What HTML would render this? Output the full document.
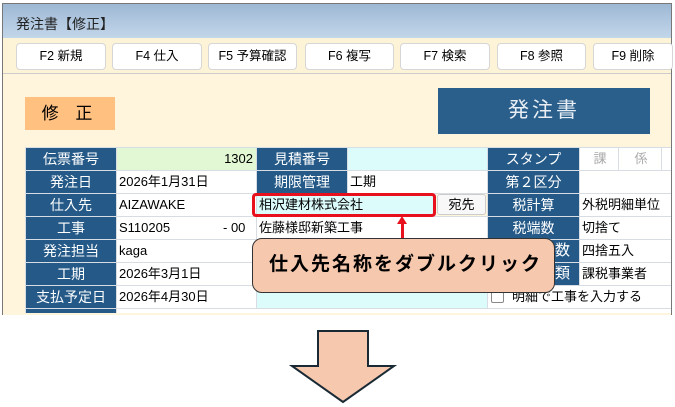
<!DOCTYPE html>
<html><head><meta charset="utf-8"><style>
*{margin:0;padding:0;box-sizing:border-box}
body{width:675px;height:407px;background:#fff;position:relative;overflow:hidden;font-family:"Liberation Sans","Noto Sans CJK JP",sans-serif;font-size:13px;color:#000}
.a{position:absolute}
.btn{position:absolute;top:43px;height:27px;background:#fff;border:1px solid #d6d6d6;border-radius:4px;text-align:center;line-height:25px;font-size:12.5px}
.l{position:absolute;background:#255a88;color:#fff;text-align:center;font-size:14px;height:22px;line-height:22px;white-space:nowrap}
.v{position:absolute;background:#fff;height:22px;line-height:22px;font-size:13px;padding-left:2px;white-space:nowrap}
</style></head><body>
<div class="a" style="left:2px;top:3px;width:670px;height:312px;border:1px solid #777;border-bottom:none;background:#fff5dc"></div>
<div class="a" style="left:3px;top:4px;width:668px;height:34px;background:linear-gradient(#9db8d4,#c3d6ea)"></div>
<div class="a" style="left:16px;top:14px;font-size:14px;color:#222">発注書【修正】</div>
<div class="a" style="left:3px;top:38px;width:668px;height:36px;background:#fdf3d6;border-bottom:1px solid #ccc"></div>
<div class="btn" style="left:16px;width:90px">F2 新規</div>
<div class="btn" style="left:112px;width:90px">F4 仕入</div>
<div class="btn" style="left:208px;width:89px">F5 予算確認</div>
<div class="btn" style="left:305px;width:89px">F6 複写</div>
<div class="btn" style="left:400px;width:90px">F7 検索</div>
<div class="btn" style="left:497px;width:89px">F8 参照</div>
<div class="btn" style="left:593px;width:80px">F9 削除</div>
<div class="a" style="left:25px;top:97px;width:90px;height:33px;background:#ffc080;text-align:center;line-height:33px;font-size:17px;letter-spacing:6px">修 正</div>
<div class="a" style="left:438px;top:88px;width:212px;height:46px;background:#2a5f8c;color:#e8eef4;text-align:center;line-height:46px;font-size:21px;letter-spacing:3px">発注書</div>
<div class="a" style="left:25px;top:147px;width:646px;height:166px;background:#d8dde4"></div>

<div class="l" style="left:26px;top:148px;width:90px">伝票番号</div>
<div class="v" style="left:117px;top:148px;width:139px;background:#e2f8d4;text-align:right;padding-right:3px">1302</div>
<div class="l" style="left:257px;top:148px;width:90px">見積番号</div>
<div class="v" style="left:348px;top:148px;width:139px;background:#dcfcfc"></div>
<div class="l" style="left:488px;top:148px;width:91px">スタンプ</div>
<div class="v" style="left:580px;top:148px;width:38px;color:#aaa;text-align:center">課</div>
<div class="v" style="left:619px;top:148px;width:42px;color:#aaa;text-align:center">係</div>
<div class="v" style="left:662px;top:148px;width:9px"></div>

<div class="l" style="left:26px;top:171px;width:90px">発注日</div>
<div class="v" style="left:117px;top:171px;width:139px">2026年1月31日</div>
<div class="l" style="left:257px;top:171px;width:90px">期限管理</div>
<div class="v" style="left:348px;top:171px;width:139px">工期</div>
<div class="l" style="left:488px;top:171px;width:91px">第２区分</div>
<div class="v" style="left:580px;top:171px;width:91px"></div>

<div class="l" style="left:26px;top:194px;width:90px">仕入先</div>
<div class="v" style="left:117px;top:194px;width:139px">AIZAWAKE</div>
<div class="v" style="left:257px;top:194px;width:178px;background:#dcfcfc">相沢建材株式会社</div>
<div class="v" style="left:436px;top:194px;width:51px;background:#fdf5dc"></div>
<div class="a" style="left:437px;top:194px;width:49px;height:21px;background:#f8f8f8;border:1px solid #ccc;border-radius:3px;text-align:center;line-height:19px">宛先</div>
<div class="l" style="left:488px;top:194px;width:91px">税計算</div>
<div class="v" style="left:580px;top:194px;width:91px">外税明細単位</div>

<div class="l" style="left:26px;top:217px;width:90px">工事</div>
<div class="v" style="left:117px;top:217px;width:139px">S110205<span style="position:absolute;left:106px">- 00</span></div>
<div class="v" style="left:257px;top:217px;width:230px">佐藤様邸新築工事</div>
<div class="l" style="left:488px;top:217px;width:91px">税端数</div>
<div class="v" style="left:580px;top:217px;width:91px">切捨て</div>

<div class="l" style="left:26px;top:240px;width:90px">発注担当</div>
<div class="v" style="left:117px;top:240px;width:139px">kaga</div>
<div class="v" style="left:257px;top:240px;width:230px"></div>
<div class="l" style="left:488px;top:240px;width:91px;text-align:right;padding-right:9px;font-size:15px">単価端数</div>
<div class="v" style="left:580px;top:240px;width:91px">四捨五入</div>

<div class="l" style="left:26px;top:263px;width:90px">工期</div>
<div class="v" style="left:117px;top:263px;width:139px">2026年3月1日</div>
<div class="v" style="left:257px;top:263px;width:230px"></div>
<div class="l" style="left:488px;top:263px;width:91px;text-align:right;padding-right:9px;font-size:15px">課税種類</div>
<div class="v" style="left:580px;top:263px;width:91px">課税事業者</div>

<div class="l" style="left:26px;top:286px;width:90px">支払予定日</div>
<div class="v" style="left:117px;top:286px;width:139px">2026年4月30日</div>
<div class="v" style="left:257px;top:286px;width:230px;background:#dcfcfc"></div>
<div class="v" style="left:488px;top:286px;width:183px;padding-left:24px">明細で工事を入力する</div>
<div class="a" style="left:491px;top:290px;width:13px;height:13px;border:1px solid #888;border-radius:2px;background:#fff"></div>
<div class="l" style="left:26px;top:309px;width:90px;height:4px"></div>
<div class="v" style="left:117px;top:309px;width:554px;height:4px"></div>

<div class="a" style="left:252px;top:193px;width:184px;height:24px;border:3px solid #e8101c;border-radius:4px"></div>
<div class="a" style="left:401px;top:222px;width:3px;height:17px;background:#e8101c"></div>
<div class="a" style="left:397px;top:216px;width:0;height:0;border-left:5px solid transparent;border-right:5px solid transparent;border-bottom:8px solid #e8101c"></div>
<div class="a" style="left:252px;top:238px;width:303px;height:55px;background:#f6c8ae;border:1.5px solid #333;border-radius:10px;font-size:19px;font-weight:bold;line-height:52px;padding-left:16px;letter-spacing:2px;white-space:nowrap">仕入先名称をダブルクリック</div>

<svg class="a" style="left:0;top:0" width="675" height="407"><polygon points="318,331 368,331 368,366 394,366 343,402 292,366 318,366" fill="#f6c8ae" stroke="#1a2a35" stroke-width="2"/></svg>
</body></html>
